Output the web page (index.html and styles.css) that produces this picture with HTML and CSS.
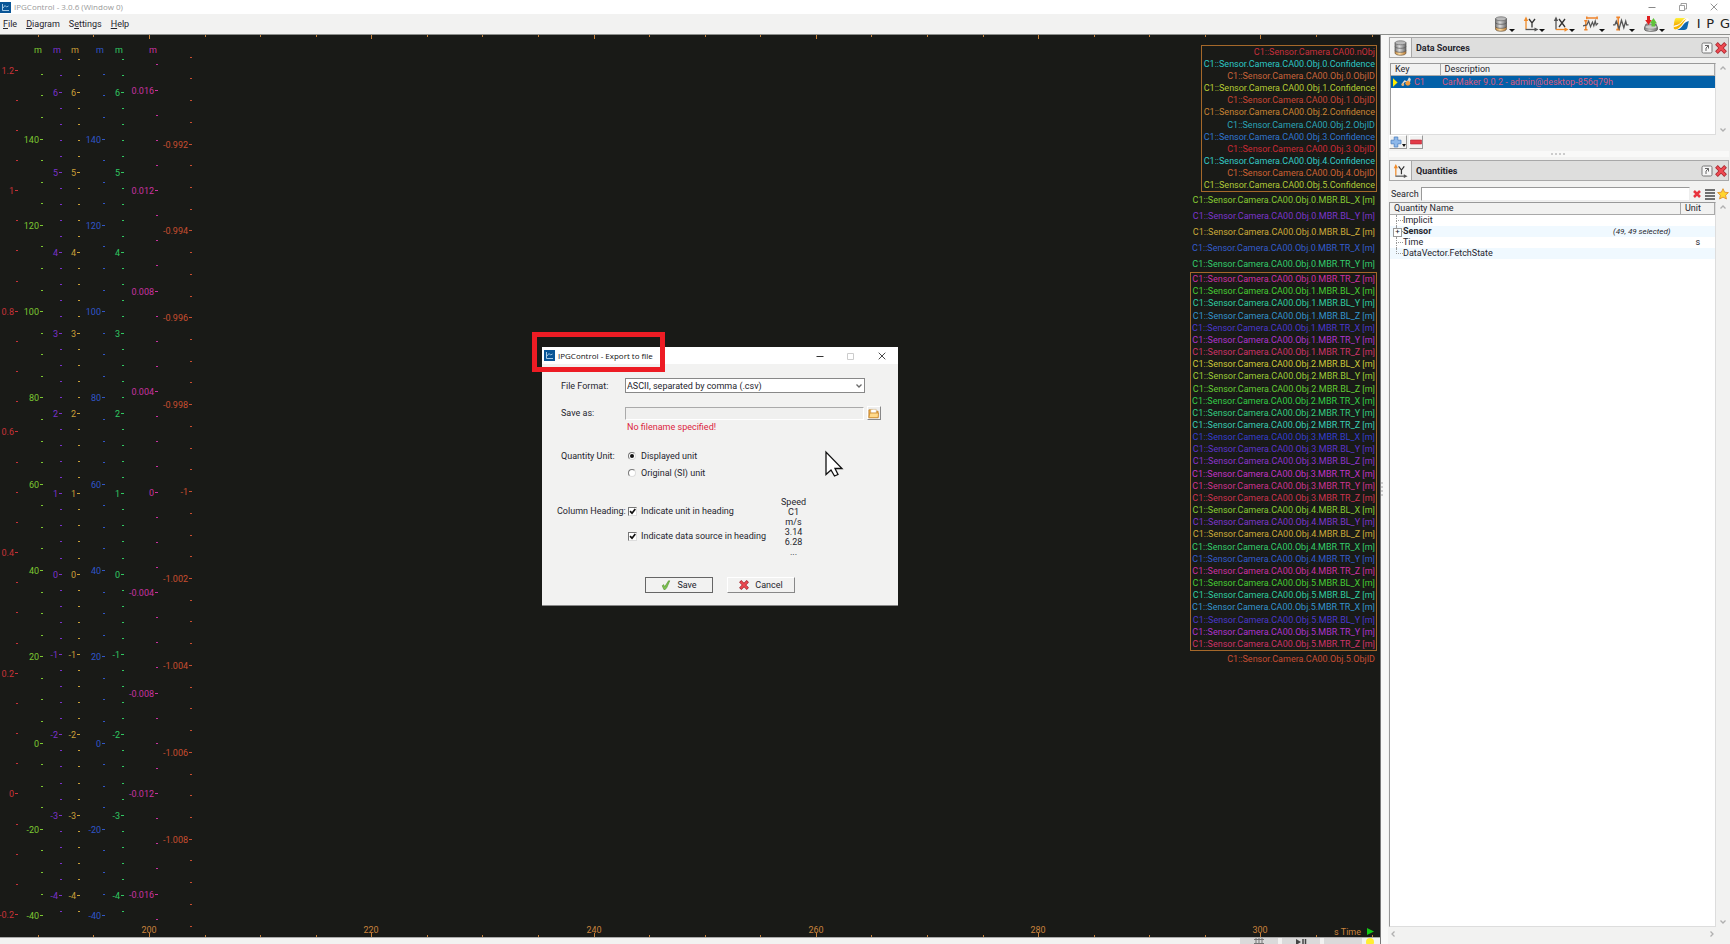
FILE: index.html
```html
<!DOCTYPE html>
<html lang="en">
<head>
<meta charset="utf-8">
<title>IPGControl</title>
<link rel="stylesheet" href="styles.css">
</head>
<body>
<svg class="defs" aria-hidden="true">
  <defs>
    <linearGradient id="steel" x1="0" x2="1" y1="0" y2="0"><stop offset="0" stop-color="#777"/><stop offset=".4" stop-color="#ddd"/><stop offset="1" stop-color="#666"/></linearGradient>
    <linearGradient id="amber" x1="0" x2="1" y1="0" y2="0"><stop offset="0" stop-color="#c98a3c"/><stop offset=".4" stop-color="#ffdfa6"/><stop offset="1" stop-color="#b97830"/></linearGradient>
    <linearGradient id="sun" x1="0" x2="0" y1="0" y2="1"><stop offset="0" stop-color="#fff23a"/><stop offset="1" stop-color="#f5a800"/></linearGradient>
    <symbol id="i-app" viewBox="0 0 11 11"><rect width="11" height="11" fill="#0a5596"/><path d="M2.5 2v6.500h6.500" fill="none" stroke="#b9d8ee" stroke-width=".9"/><path d="M3 6l2-2.500 1.500 1.500 2-1" fill="none" stroke="#b9d8ee" stroke-width=".8"/></symbol>
    <symbol id="i-db" viewBox="0 0 14 16">
      <path d="M1.500 10.500h11V13c0 3-11 3-11 0z" fill="url(#amber)" stroke="#6b5a45" stroke-width=".7"/>
      <path d="M1.500 6.500h11v4c0 2.400-11 2.400-11 0z" fill="url(#steel)" stroke="#555" stroke-width=".7"/>
      <path d="M1.500 2.800h11v3.700c0 2.400-11 2.400-11 0z" fill="url(#steel)" stroke="#555" stroke-width=".7"/>
      <ellipse cx="7" cy="2.800" rx="5.500" ry="2" fill="#bbb" stroke="#666" stroke-width=".7"/>
    </symbol>
    <symbol id="i-y" viewBox="0 0 16 16"><path d="M3 13V4" stroke="#f08a28" stroke-width="1.300"/><path d="M3 .5L5.200 5H.8z" fill="#f08a28"/><path d="M2.500 13.500H12" stroke="#555" stroke-width="1.300"/><path d="M15.500 13.500L11.500 11.500v4z" fill="#555"/><path d="M6 3l3 4 3-4M9 7v4.500" fill="none" stroke="#333" stroke-width="1.300"/></symbol>
    <symbol id="i-x" viewBox="0 0 16 16"><path d="M3 13.500V4" stroke="#555" stroke-width="1.300"/><path d="M3 .5L5.200 5H.8z" fill="#555"/><path d="M3 13.500H12" stroke="#f08a28" stroke-width="1.300"/><path d="M15.500 13.500L11.500 11.300v4.400z" fill="#f08a28"/><path d="M6 3l6 8M12 3l-6 8" fill="none" stroke="#333" stroke-width="1.300"/></symbol>
    <symbol id="i-zoomxy" viewBox="0 0 17 16"><path d="M4 1.500h11M4 0v3M15 0v3M3 4v10M1.300 4.500h3.500M1.300 14h3.500" fill="none" stroke="#ef842b" stroke-width="1.600"/><path d="M0 10l4-1 2-4 2 6 2-5 1.500 4 1.500-5 1 4 2-2" fill="none" stroke="#555" stroke-width="1.300"/></symbol>
    <symbol id="i-cursor" viewBox="0 0 17 16"><path d="M5.500 1v13M3.500 1h4M3.500 14h4" fill="none" stroke="#ef842b" stroke-width="1.700"/><path d="M0 9h2l1.500-4 3 8 2.500-9 2.500 8 2-7 1 4h2" fill="none" stroke="#555" stroke-width="1.400"/></symbol>
    <symbol id="i-load" viewBox="0 0 14 16"><path d="M2 8h10l1.500 3.500v2c0 2.500-13 2.500-13 0v-2z" fill="url(#steel)" stroke="#555" stroke-width=".7"/><ellipse cx="7" cy="11" rx="6" ry="2.200" fill="#ccc" stroke="#777" stroke-width=".6"/><path d="M3 0h3v4h1.800L4.500 9 1.200 4H3z" fill="#e02020"/><path d="M7.500 10.500V7H6L9.500 2 13 7.500h-2v3z" fill="#5fc23a"/></symbol>
    <symbol id="i-logo" viewBox="0 0 16 14"><path d="M4 1h8C8 2 8 7 1 8.500L.5 10C1.500 5 1 1 4 1z" fill="url(#sun)"/><path d="M4 1h9c-4 1-4 7-12 7.500L2 3.500C2.400 1.800 2.800 1 4 1z" fill="url(#sun)"/><path d="M15.800 4L14.500 10c-.5 2.200-1.500 3-3.500 3H3.500C10 12 9.500 5 15.800 4z" fill="#0f67ae"/><path d="M1 9c8-.5 8-7 12.500-8 1.800 0 2.500 1 2.300 2.500C9.500 4.500 9 12 3 13 1 13 .3 11.500 1 9z" fill="#fff"/><path d="M.8 10C8.500 9.500 9 2.500 14.500 1.500c-4 1.500-5 9.500-12 11C1 12.500.5 11.500.8 10z" fill="#f7b500"/></symbol>
    <symbol id="i-cross" viewBox="0 0 12 12"><path d="M2.800 2.800l6.400 6.400M9.200 2.800l-6.400 6.400" stroke="#a3252c" stroke-width="3.800" stroke-linecap="square"/><path d="M2.800 2.800l6.400 6.400M9.200 2.800l-6.400 6.400" stroke="#ee4a52" stroke-width="2.400" stroke-linecap="square"/></symbol>
    <symbol id="i-dock" viewBox="0 0 12 12"><rect x="1" y="1" width="10" height="10" rx="1.500" fill="#f6f6f6" stroke="#777"/><path d="M4 3.500h3.500v3M7.500 3.500L5 6v3" fill="none" stroke="#666"/></symbol>
    <symbol id="i-check" viewBox="0 0 12 12"><path d="M1.500 7l1.500-1.500L4.500 8 9 1h1.500L7 9l-2 2.500H3.500z" fill="#7cc34e" stroke="#4b8a2a" stroke-width=".7"/></symbol>
    <symbol id="i-tick" viewBox="0 0 9 9"><path d="M2 4.200l2 2L7.300 2" fill="none" stroke="#111" stroke-width="1.700"/></symbol>
    <symbol id="i-folder" viewBox="0 0 12 12"><path d="M1 10.500V2h4l1 1.500h5v7z" fill="#f0b04a" stroke="#c07a1e" stroke-width=".8"/><path d="M3 1.500h6v4H3z" fill="#fff" stroke="#c8a060" stroke-width=".5"/><path d="M1 10.500L2 5.500h9.500L11 10.500z" fill="#ffd98a" stroke="#c8862a" stroke-width=".8"/></symbol>
    <symbol id="i-star" viewBox="0 0 12 12"><path d="M6 .7l1.600 3.500 3.800.4-2.800 2.600.8 3.800L6 9.100 2.600 11l.8-3.800L.6 4.600l3.800-.4z" fill="#ffd52e" stroke="#e0902a" stroke-width=".9"/></symbol>
    <symbol id="i-up" viewBox="0 0 8 8"><path d="M1.500 5.500L4 3l2.500 2.500" fill="none" stroke="#b0b0b0" stroke-width="1.300"/></symbol>
    <symbol id="i-min" viewBox="0 0 8 8"><path d="M.5 4.500h7" stroke="currentColor"/></symbol>
    <symbol id="i-max" viewBox="0 0 8 8"><path d="M.5 1.500h6v6h-6z" fill="none" stroke="currentColor"/></symbol>
    <symbol id="i-restore" viewBox="0 0 8 8"><path d="M.5 2.500h5v5h-5zM2 2V.5h5.500V6H6" fill="none" stroke="currentColor" stroke-width=".8"/></symbol>
    <symbol id="i-close" viewBox="0 0 8 8"><path d="M.7.700l6.600 6.600M7.300.700L.700 7.300" stroke="currentColor" stroke-width=".9"/></symbol>
  </defs>
</svg>

<div class="app">
  <header class="titlebar">
    <svg class="ico-app"><use href="#i-app"/></svg>
    <span class="titlebar-text">IPGControl - 3.0.6 (Window 0)</span>
    <div class="win-buttons">
      <button class="plain" aria-label="Minimize"><svg><use href="#i-min"/></svg></button>
      <button class="plain" aria-label="Restore"><svg><use href="#i-restore"/></svg></button>
      <button class="plain" aria-label="Close"><svg><use href="#i-close"/></svg></button>
    </div>
  </header>

  <div class="menubar">
    <nav class="menus">
      <button class="plain"><u>F</u>ile</button>
      <button class="plain"><u>D</u>iagram</button>
      <button class="plain">S<u>e</u>ttings</button>
      <button class="plain"><u>H</u>elp</button>
    </nav>
    <div class="tools">
      <button class="tool" aria-label="Data sources"><svg><use href="#i-db"/></svg></button>
      <button class="tool" aria-label="Y axis"><svg><use href="#i-y"/></svg></button>
      <button class="tool" aria-label="X axis"><svg><use href="#i-x"/></svg></button>
      <button class="tool" aria-label="Zoom"><svg><use href="#i-zoomxy"/></svg></button>
      <button class="tool" aria-label="Cursor"><svg><use href="#i-cursor"/></svg></button>
      <button class="tool" aria-label="Load and save"><svg><use href="#i-load"/></svg></button>
      <div class="brand"><svg><use href="#i-logo"/></svg><span>I</span><span>P</span><span>G</span></div>
    </div>
  </div>

  <div class="workspace">
    <main class="diagram">
      <div class="plot">
        <svg class="axes" id="axes"></svg>
        <div class="legend" id="legend"></div>
      </div>
      <footer class="playbar">
        <button class="play-btn" aria-label="Grid"><svg viewBox="0 0 12 8"><path d="M1 1.500h10M1 5.500h10M3 0v8M6 0v8M9 0v8" stroke="#777" fill="none"/></svg></button>
        <button class="play-btn" aria-label="Play or pause"><svg viewBox="0 0 12 8"><path d="M1 1l5 3-5 3z" fill="#444"/><path d="M8 1v6M10.500 1v6" stroke="#444" stroke-width="1.500"/></svg></button>
        <button class="play-btn" aria-label="Options"></button>
        <span class="status-dot"></span>
      </footer>
    </main>
    <div class="splitter"><i></i></div>

    <aside class="side">
      <section class="pane">
        <div class="pane-head">
          <span class="pane-icon"><svg><use href="#i-db"/></svg></span>
          <h2>Data Sources</h2>
          <button class="plain" aria-label="Undock"><svg><use href="#i-dock"/></svg></button>
          <button class="plain" aria-label="Close pane"><svg><use href="#i-cross"/></svg></button>
        </div>
        <div class="list-wrap sources">
          <div class="list-box">
            <table>
              <colgroup><col class="col-key"><col></colgroup>
              <thead><tr><th>Key</th><th>Description</th></tr></thead>
              <tbody><tr class="selected"><td><span class="key"><svg class="key-arrow" viewBox="0 0 6 10"><path d="M0 0l5.500 5L0 10z" fill="#ffee00"/></svg><svg class="key-car" viewBox="0 0 11 10"><path d="M1 8l3-4 3 1 2-4 1 1-1 4" stroke="#ddd" stroke-width="1.500" fill="none"/><circle cx="7.500" cy="6.500" r="2.700" fill="#ef9a3c"/><circle cx="2" cy="8" r="1.500" fill="#e8b070"/></svg>C1</span></td><td>CarMaker 9.0.2 - admin@desktop-856q79h</td></tr></tbody>
            </table>
          </div>
          <div class="scroll"><svg><use href="#i-up"/></svg><svg class="down"><use href="#i-up"/></svg></div>
        </div>
        <div class="source-actions">
          <button class="mini add" aria-label="Add source"><svg viewBox="0 0 12 12"><path d="M4.200 1h3.600v3.200H11v3.600H7.800V11H4.200V7.800H1V4.200h3.200z" fill="#8db8ea" stroke="#4d80c0" stroke-width=".8"/></svg></button>
          <button class="mini" aria-label="Remove source"><svg viewBox="0 0 12 12"><path d="M.5 4h11v4H.5z" fill="#e23b48" stroke="#b52230" stroke-width=".6"/></svg></button>
        </div>
      </section>

      <div class="pane-split"><i></i></div>

      <section class="pane grow">
        <div class="pane-head">
          <span class="pane-icon"><svg><use href="#i-y"/></svg></span>
          <h2>Quantities</h2>
          <button class="plain" aria-label="Undock"><svg><use href="#i-dock"/></svg></button>
          <button class="plain" aria-label="Close pane"><svg><use href="#i-cross"/></svg></button>
        </div>
        <div class="search">
          <label for="q">Search</label>
          <input id="q" type="text">
          <button class="plain" aria-label="Clear"><svg viewBox="0 0 12 12"><path d="M3 3l6 6M9 3l-6 6" stroke="#e8343e" stroke-width="2.500"/></svg></button>
          <button class="plain" aria-label="List"><svg viewBox="0 0 12 12"><path d="M1 2h10M1 5h10M1 8h10M1 11h10" stroke="#444" stroke-width="1.300"/></svg></button>
          <button class="plain" aria-label="Favourites"><svg><use href="#i-star"/></svg></button>
        </div>
        <div class="list-wrap quantities">
          <div class="list-box">
            <table class="tree">
              <colgroup><col><col class="col-count"><col class="col-unit"></colgroup>
              <thead><tr><th colspan="2">Quantity Name</th><th>Unit</th></tr></thead>
              <tbody>
                <tr><td>Implicit</td><td></td><td></td></tr>
                <tr><td class="branch"><b>Sensor</b></td><td class="count">(49, 49 selected)</td><td></td></tr>
                <tr><td>Time</td><td></td><td>s</td></tr>
                <tr><td class="last">DataVector.FetchState</td><td></td><td></td></tr>
              </tbody>
            </table>
          </div>
          <div class="scroll"><svg><use href="#i-up"/></svg><svg class="down"><use href="#i-up"/></svg></div>
        </div>
        <div class="hscroll"><svg class="left"><use href="#i-up"/></svg><svg class="right"><use href="#i-up"/></svg></div>
      </section>
    </aside>
  </div>
</div>

<form class="dialog" role="dialog" aria-labelledby="dlg-title" onsubmit="return false">
  <div class="dlg-title">
    <svg class="ico-app"><use href="#i-app"/></svg>
    <span id="dlg-title">IPGControl - Export to file</span>
    <div class="win-buttons">
      <button type="button" class="plain" aria-label="Minimize"><svg><use href="#i-min"/></svg></button>
      <button type="button" class="plain off" aria-label="Maximize" disabled><svg><use href="#i-max"/></svg></button>
      <button type="button" class="plain" aria-label="Close"><svg><use href="#i-close"/></svg></button>
    </div>
  </div>
  <div class="dlg-body">
    <div class="field">
      <label for="fmt">File Format:</label>
      <span class="combo"><select id="fmt"><option>ASCII, separated by comma (.csv)</option></select><svg class="down"><use href="#i-up"/></svg></span>
    </div>
    <div class="field save-row">
      <label for="save">Save as:</label>
      <input class="path" id="save" type="text">
      <button type="button" class="browse" aria-label="Browse"><svg><use href="#i-folder"/></svg></button>
    </div>
    <p class="error">No filename specified!</p>
    <div class="field group" role="radiogroup" aria-label="Quantity Unit">
      <span class="caption">Quantity Unit:</span>
      <div class="choices">
        <label><input type="radio" name="unit" checked>Displayed unit</label>
        <label><input type="radio" name="unit">Original (SI) unit</label>
      </div>
    </div>
    <div class="field heading" role="group" aria-label="Column Heading">
      <span class="caption wide">Column Heading:</span>
      <div class="choices">
        <label><span class="tickbox"><input type="checkbox" checked><svg><use href="#i-tick"/></svg></span>Indicate unit in heading</label>
        <label><span class="tickbox"><input type="checkbox" checked><svg><use href="#i-tick"/></svg></span>Indicate data source in heading</label>
      </div>
      <div class="sample"><span>Speed</span><span>C1</span><span>m/s</span><span>3.14</span><span>6.28</span><span>...</span></div>
    </div>
    <div class="actions">
      <button type="submit" class="btn default"><svg><use href="#i-check"/></svg>Save</button>
      <button type="button" class="btn"><svg><use href="#i-cross"/></svg>Cancel</button>
    </div>
  </div>
</form>
<div class="highlight"></div>
<svg class="pointer" viewBox="0 0 18 26"><path d="M1 1v22.500l5-4.500 3.500 6 3.500-1.500-3-6h7z" fill="#fff" stroke="#111" stroke-width="1.300"/></svg>
<script src="app.js"></script>
</body>
</html>
```

FILE: styles.css
```css
:root {
  --ui: Roboto, "Liberation Sans", sans-serif;
  --win: "Open Sans", sans-serif;
  --face: #f2f2f1;
  --ink: #25252d;
}
* { box-sizing: border-box; }
body { margin: 0; font: 9px/12px var(--ui); color: var(--ink); background: var(--face); overflow: hidden; }
button, input, select { font: inherit; color: inherit; margin: 0; padding: 0; }
svg { display: block; overflow: visible; }
.defs { position: absolute; width: 0; height: 0; }
.app { display: flex; flex-direction: column; height: 100vh; }
.plain { border: 0; background: none; }
.down { transform: rotate(180deg); }
.left { transform: rotate(-90deg); }
.right { transform: rotate(90deg); }

.titlebar { display: flex; align-items: center; height: 14px; background: #fff; font: 8px/12px var(--win); color: #9a9a9a; gap: 3px; flex: none; }
.ico-app { width: 11px; height: 11px; }
.win-buttons { display: flex; gap: 23px; margin-left: auto; }
.win-buttons svg { width: 8px; height: 8px; }
.titlebar .win-buttons { padding-right: 12px; color: #888; }

.menubar { display: flex; justify-content: space-between; height: 21px; border-bottom: 1px solid #8d8f8c; background: var(--face); flex: none; }
.menus { display: flex; gap: 9px; padding-left: 3px; align-items: center; }
.tools { display: flex; align-items: center; }
.tool { position: relative; width: 24px; height: 18px; margin-right: 6px; border: 0; background: none; }
.tool svg { width: 16px; height: 16px; }
.tool::after { content: ""; position: absolute; right: 2px; bottom: 1px; border: 3px solid transparent; border-top-color: #111; border-bottom: 0; }
.brand { display: flex; align-items: center; justify-content: space-between; width: 57px; font: 13px/16px "DejaVu Sans", sans-serif; color: #222; }
.brand svg { width: 16px; height: 14px; margin-right: 2px; }

.workspace { display: flex; flex: 1; min-height: 0; }
.diagram { flex: 1; display: flex; flex-direction: column; min-width: 0; }
.plot { position: relative; flex: 1; background: #191a17; }
.axes { width: 100%; height: 100%; }
.axes text { font: 9px var(--ui); }
.legend { position: absolute; top: 10px; right: 3px; display: flex; flex-direction: column; align-items: flex-end; text-align: right; line-height: 12px; }
.legend-group { display: grid; grid-auto-rows: 1fr; align-items: center; border: 1px solid #a5682a; padding: 0 1px; }
.legend-group.scalars { height: 147px; padding-left: 2px; }
.legend-group.boxes { height: 379px; }
.legend-free { display: grid; line-height: 16px; padding-right: 2px; }
.playbar { display: flex; justify-content: flex-end; height: 7px; gap: 4px; padding-right: 6px; overflow: hidden; border-top: 1px solid #aaa; }
.play-btn { width: 38px; height: 10px; border: 0; background: #dadada; display: flex; justify-content: center; }
.play-btn svg { width: 12px; height: 8px; }
.status-dot { width: 8px; height: 8px; border-radius: 4px; background: #ffee33; }
.splitter { width: 8px; border-left: 1px solid #777; background: #f8f8f7; display: flex; align-items: center; }
.splitter i { width: 2px; height: 16px; background: repeating-linear-gradient(#ccc 0 2px, transparent 2px 4px); }

.side { width: 342px; display: flex; flex-direction: column; padding: 2px 1px 0; }
.pane { display: flex; flex-direction: column; }
.grow { flex: 1; min-height: 0; }
.pane-head { display: flex; align-items: center; height: 21px; border: 1px solid #a8a8a8; background: #dededd; padding-right: 1px; }
.pane-head h2 { margin: 0 auto 0 4px; font-size: 9px; }
.pane-head .plain { margin-left: 2px; }
.pane-head .plain svg { width: 12px; height: 12px; }
.pane-icon { align-self: stretch; width: 22px; display: flex; align-items: center; justify-content: center; background: #f3f3f2; border-right: 1px solid #a8a8a8; }
.pane-icon svg { width: 15px; height: 16px; }
.list-wrap { display: flex; }
.list-box { flex: 1; background: #fff; border: 1px solid #999; border-right-color: #ddd; border-bottom-color: #ddd; }
.sources { height: 72px; margin: 5px 0 0 1px; }
.scroll { width: 13px; display: flex; flex-direction: column; justify-content: space-between; align-items: center; padding: 1px 0; }
.scroll svg, .hscroll svg { width: 8px; height: 8px; }
.hscroll { display: flex; justify-content: space-between; align-items: center; height: 17px; padding: 0 13px 4px 0; }
table { width: 100%; border-collapse: collapse; table-layout: fixed; line-height: 11px; }
th { font-weight: normal; text-align: left; padding: 0 4px; background: var(--face); border-bottom: 1px solid #a9a9a9; border-right: 1px solid #a9a9a9; line-height: 11px; }
td { padding: 0 2px; white-space: nowrap; }
.col-key { width: 49px; }
.selected { background: #0360a8; color: #dc5a7c; line-height: 12px; }
.key { display: flex; align-items: center; gap: 3px; }
.key-arrow { width: 5px; height: 9px; }
.key-car { width: 10px; height: 10px; }
.source-actions { display: flex; gap: 2px; }
.mini { height: 14px; width: 14px; border: 1px solid #fff; border-right-color: #999; border-bottom-color: #999; background: var(--face); }
.mini svg { width: 12px; height: 12px; }
.mini.add { width: 18px; position: relative; }
.mini.add::after { content: ""; position: absolute; right: 0; bottom: 1px; border: 2px solid transparent; border-top: 3px solid #111; border-bottom: 0; }
.pane-split { display: flex; justify-content: center; align-items: center; height: 6px; margin: 2px 0 3px; background: #f9f9f8; }
.pane-split i { width: 16px; height: 2px; background: repeating-linear-gradient(90deg, #ccc 0 2px, transparent 2px 4px); }

.search { display: flex; align-items: center; gap: 1px; padding: 6px 0 1px 2px; }
.search label { margin-right: 1px; }
.search input { flex: 1; min-width: 0; height: 14px; border: 1px solid #999; border-right-color: #eee; border-bottom-color: #eee; background: #fff; }
.search svg { width: 12px; height: 12px; }
.quantities { flex: 1; min-height: 0; }
.tree td, .tree th { height: 11px; }
.tree tbody td:first-child { position: relative; padding-left: 13px; }
.tree tbody tr:nth-child(even) { background: #f0f9ff; }
.tree tbody td:first-child::before { content: ""; position: absolute; left: 6px; top: 0; width: 6px; height: 5px; border-left: 1px dotted #999; border-bottom: 1px dotted #999; }
.tree tbody td:not(.last):first-child::after { content: ""; position: absolute; left: 6px; top: 5px; height: 6px; border-left: 1px dotted #999; }
.tree tbody td.branch:first-child::after { content: "+"; left: 3px; top: 2px; width: 7px; height: 7px; border: 1px solid #999; background: #fff; font-size: 8px; line-height: 5px; text-align: center; }
.col-count { width: 74px; }
.col-unit { width: 34px; }
.tree td.count { font-size: 8px; font-style: italic; text-align: right; padding-right: 10px; }
.tree td:last-child { padding-left: 15px; }

.dialog { position: absolute; left: 542px; top: 347px; width: 356px; background: var(--face); border-bottom: 1px solid #888; }
.dlg-title { display: flex; align-items: center; gap: 3px; height: 17px; padding: 0 12px 0 2px; background: #fff; font: 8px/12px var(--win); color: #111; }
.dlg-title .win-buttons { color: #333; }
.dlg-title .off { color: #ccc; }
.dlg-body { padding: 14px 17px 12px 15px; }
.field { display: flex; align-items: center; }
.field > label, .caption { width: 68px; padding-left: 4px; }
.caption.wide { padding-left: 0; white-space: nowrap; }
.combo { position: relative; width: 240px; }
.combo select { display: block; width: 100%; height: 15px; border: 1px solid #888; background: #fff; appearance: none; padding-left: 1px; }
.combo svg { position: absolute; right: 2px; top: 4px; width: 8px; height: 8px; }
.combo use { filter: brightness(.6); }
.save-row { margin-top: 13px; }
.path { width: 240px; height: 13px; border: 1px solid #aaa; border-right-color: #fff; border-bottom-color: #fff; background: #f0f0ef; }
.browse { width: 14px; height: 14px; margin-left: 3px; border: 1px solid #fff; border-right-color: #888; border-bottom-color: #888; background: #eee; }
.browse svg { width: 11px; height: 11px; }
.error { margin: 1px 0 0 70px; color: #dc2440; }
.field.group { margin-top: 17px; align-items: flex-start; }
.choices { display: grid; gap: 5px; padding-left: 3px; }
.choices label { display: flex; align-items: center; gap: 4px; white-space: nowrap; }
.choices input { display: grid; place-items: center; appearance: none; width: 9px; height: 9px; background: #fff; border: 1px solid #777; border-right-color: #ddd; border-bottom-color: #ddd; }
.choices input[type="radio"] { width: 8px; height: 8px; border-radius: 4px; margin-right: 1px; }
.choices input[type="radio"]:checked::before { content: ""; width: 4px; height: 4px; border-radius: 2px; background: #111; }
.tickbox { position: relative; }
.tickbox svg { position: absolute; inset: 0; width: 9px; height: 9px; pointer-events: none; }
.tickbox input:not(:checked) + svg { display: none; }
.field.heading { margin-top: 17px; align-items: flex-start; }
.heading .caption, .heading .choices { padding-top: 9px; }
.heading .choices { gap: 13px; width: 145px; }
.sample { display: flex; flex-direction: column; align-items: center; width: 47px; line-height: 10px; padding-top: 1px; }
.actions { display: flex; gap: 14px; padding: 20px 0 0 88px; }
.btn { display: flex; align-items: center; justify-content: center; gap: 6px; width: 68px; height: 16px; background: var(--face); border: 1px solid #fff; border-right-color: #888; border-bottom-color: #888; }
.btn.default { border-color: #666; }
.btn svg { width: 10px; height: 10px; }
.highlight { position: absolute; left: 532px; top: 332px; width: 133px; height: 40px; border: 5px solid #ed1c24; }
.pointer { position: absolute; left: 825px; top: 451px; width: 18px; height: 26px; }
```

FILE: app.js
```js
const NS = "http://www.w3.org/2000/svg";
const BASE_W = 1380, BASE_H = 902;

/* x: tick start, first/step: major positions, sub: divisions between majors */
const axes = [
  { x: 15, color: "#c83238", first: 35, step: 120.65, sub: 4, labels: ["1.2", "1", "0.8", "0.6", "0.4", "0.2", "0", "-0.2"] },
  { x: 40, color: "#7dc832", unit: "m", first: 104, step: 86.3, sub: 4, before: 3, labels: ["140", "120", "100", "80", "60", "40", "20", "0", "-20", "-40"] },
  { x: 59, color: "#7a32cc", unit: "m", first: 57, step: 80.35, sub: 5, before: 2, after: 1, labels: ["6", "5", "4", "3", "2", "1", "0", "-1", "-2", "-3", "-4"] },
  { x: 77, color: "#c89f38", unit: "m", first: 57, step: 80.35, sub: 5, before: 2, after: 1, labels: ["6", "5", "4", "3", "2", "1", "0", "-1", "-2", "-3", "-4"] },
  { x: 102, color: "#3056c8", unit: "m", first: 104, step: 86.3, sub: 4, before: 3, labels: ["140", "120", "100", "80", "60", "40", "20", "0", "-20", "-40"] },
  { x: 121, color: "#30c862", unit: "m", first: 57, step: 80.35, sub: 5, before: 2, after: 1, labels: ["6", "5", "4", "3", "2", "1", "0", "-1", "-2", "-3", "-4"] },
  { x: 155, color: "#c832a0", unit: "m", first: 55, step: 100.5, sub: 4, before: 1, after: 1, labels: ["0.016", "0.012", "0.008", "0.004", "0", "-0.004", "-0.008", "-0.012", "-0.016"] },
  { x: 189, color: "#c84e30", first: 109, step: 86.9, sub: 4, before: 4, after: 4, labels: ["-0.992", "-0.994", "-0.996", "-0.998", "-1", "-1.002", "-1.004", "-1.006", "-1.008"] }
];

const scalars = [
  ["nObj", "#c8303c"], ["Obj.0.Confidence", "#2cc6c4"], ["Obj.0.ObjID", "#c8643a"], ["Obj.1.Confidence", "#b6cc34"],
  ["Obj.1.ObjID", "#c84634"], ["Obj.2.Confidence", "#c88434"], ["Obj.2.ObjID", "#2aa4b8"], ["Obj.3.Confidence", "#3076d0"],
  ["Obj.3.ObjID", "#cc2a36"], ["Obj.4.Confidence", "#34cac6"], ["Obj.4.ObjID", "#cc6234"], ["Obj.5.Confidence", "#b2ca38"]
];
const free = [["0.MBR.BL_X", "#88cc34"], ["0.MBR.BL_Y", "#7c36cc"], ["0.MBR.BL_Z", "#ccaa3a"], ["0.MBR.TR_X", "#345ccc"], ["0.MBR.TR_Y", "#34cc6c"]];
const boxes = [
  ["0.MBR.TR_Z", "#cc30a2"], ["1.MBR.BL_X", "#46cc34"], ["1.MBR.BL_Y", "#30cca0"], ["1.MBR.BL_Z", "#3494cc"],
  ["1.MBR.TR_X", "#4a38cc"], ["1.MBR.TR_Y", "#ae34cc"], ["1.MBR.TR_Z", "#cc3468"], ["2.MBR.BL_X", "#ccc83a"],
  ["2.MBR.BL_Y", "#9ecc38"], ["2.MBR.BL_Z", "#64cc34"], ["2.MBR.TR_X", "#34cc48"], ["2.MBR.TR_Y", "#34cc80"],
  ["2.MBR.TR_Z", "#3accb4"], ["3.MBR.BL_X", "#343ecc"], ["3.MBR.BL_Y", "#5c34cc"], ["3.MBR.BL_Z", "#8c34cc"],
  ["3.MBR.TR_X", "#c034c4"], ["3.MBR.TR_Y", "#cc3490"], ["3.MBR.TR_Z", "#cc3450"], ["4.MBR.BL_X", "#88cc34"],
  ["4.MBR.BL_Y", "#7c36cc"], ["4.MBR.BL_Z", "#ccaa3a"], ["4.MBR.TR_X", "#34cc6c"], ["4.MBR.TR_Y", "#345ccc"],
  ["4.MBR.TR_Z", "#cc30a2"], ["5.MBR.BL_X", "#46cc34"], ["5.MBR.BL_Z", "#30cca0"], ["5.MBR.TR_X", "#3494cc"],
  ["5.MBR.BL_Y", "#4a38cc"], ["5.MBR.TR_Y", "#ae34cc"], ["5.MBR.TR_Z", "#cc3468"]
];

const svg = document.getElementById("axes");

function add(tag, attrs, text) {
  const el = document.createElementNS(NS, tag);
  for (const k in attrs) el.setAttribute(k, attrs[k]);
  if (text !== undefined) el.textContent = text;
  svg.appendChild(el);
}

function draw() {
  svg.replaceChildren();
  const w = svg.clientWidth, h = svg.clientHeight;
  const ky = h / BASE_H, kx = w / BASE_W;
  for (const a of axes) {
    const first = -(a.before === undefined ? 0 : a.before);
    const last = (a.labels.length - 1) * a.sub + (a.after || 0);
    if (a.unit) add("text", { x: a.x + 2, y: 18, fill: a.color, "text-anchor": "end" }, a.unit);
    for (let i = first; i <= last; i++) {
      const y = Math.floor((a.first + i * a.step / a.sub) * ky);
      const major = i >= 0 && i % a.sub === 0 && i / a.sub < a.labels.length;
      add("rect", { x: major ? a.x : a.x + 1, y: y, width: major ? 3 : 2, height: 1, fill: a.color });
      if (major) add("text", { x: a.x - 1, y: y + 4, fill: a.color, "text-anchor": "end" }, a.labels[i / a.sub]);
    }
  }
  for (let i = -2; i <= 22; i++) {
    const x = Math.floor((149.5 + i * 55.57) * kx);
    const major = i % 4 === 0;
    add("rect", { x: x, y: 0, width: 1, height: major ? 4 : 2, fill: "#c8823c" });
    add("rect", { x: x, y: h - (major ? 4 : 2), width: 1, height: major ? 4 : 2, fill: "#c8823c" });
    if (major) add("text", { x: x, y: h - 4, fill: "#c8823c", "text-anchor": "middle" }, 200 + i * 5);
  }
  add("text", { x: w - 19, y: h - 2, fill: "#c8823c", "text-anchor": "end" }, "s  Time");
  add("path", { d: `M${w - 13} ${h - 9}l7 3.500-7 3.500z`, fill: "#14c814" });
}

function group(cls, rows, fmt) {
  const box = document.createElement("div");
  box.className = cls;
  for (const [name, color] of rows) {
    const row = document.createElement("span");
    row.style.color = color;
    row.textContent = fmt(name);
    box.appendChild(row);
  }
  document.getElementById("legend").appendChild(box);
}
const scalar = n => "C1::Sensor.Camera.CA00." + n;
const metric = n => "C1::Sensor.Camera.CA00.Obj." + n + " [m]";

group("legend-group scalars", scalars, scalar);
group("legend-free", free, metric);
group("legend-group boxes", boxes, metric);
group("legend-free", [["Obj.5.ObjID", "#c84e34"]], scalar);
draw();
window.addEventListener("resize", draw);
```
